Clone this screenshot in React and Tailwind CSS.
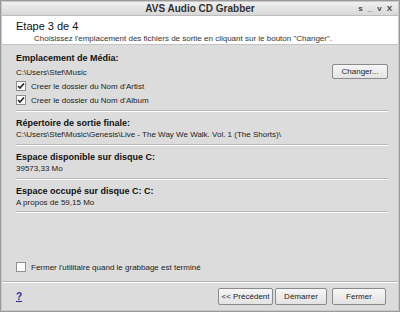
import React from "react";

function Check({ checked, label }) {
    return (
        <div className="flex items-center gap-[5px] h-[14px]">
            <div className="w-[10px] h-[10px] border border-[#8e8f8f] bg-white flex items-center justify-center">
                {checked && (
                    <svg width="8" height="8" viewBox="0 0 8 8">
                        <path d="M1 4 L3 6 L7 1.5" stroke="#222" strokeWidth="1.6" fill="none" />
                    </svg>
                )}
            </div>
            <span>{label}</span>
        </div>
    );
}

function Sep() {
    return <div className="h-[2px] border-t border-[#b9b9b9] border-b-white bg-[#dcdcdc] border-b mr-[10px]" />;
}

function Btn({ children, w, h = "h-[17px]" }) {
    return (
        <button className={`${w} ${h} whitespace-nowrap border border-[#8a8a8a] rounded-[2px] bg-gradient-to-b from-[#f6f6f6] to-[#e3e3e3] text-[8px] text-[#222] flex items-center justify-center`}>
            {children}
        </button>
    );
}

export default function App() {
    return (
        <div className="w-[400px] h-[312px] bg-[#9a9a9a] p-[1px] font-['Liberation_Sans',sans-serif] text-[#222] overflow-hidden">
            <div className="w-full h-full flex flex-col bg-[#dcdcdc] border border-[#c8c8c8]">
                {/* Title bar */}
                <div className="h-[14px] shrink-0 bg-gradient-to-b from-[#f0f0f0] to-[#d8d8d8] flex items-center relative border-b border-[#bdbdbd]">
                    <div className="flex-1 text-center text-[10px] font-bold text-[#333]">AVS Audio CD Grabber</div>
                    <div className="absolute right-[6px] top-0 h-full flex items-center gap-[5px] text-[8px] font-bold text-[#444]">
                        <span>s</span>
                        <span>_</span>
                        <span>v</span>
                        <span>X</span>
                    </div>
                </div>

                {/* Header */}
                <div className="h-[29px] shrink-0 bg-white border-b border-[#c4c4c4] pl-[14px] pt-[4px]">
                    <div className="text-[11px] leading-[13px] text-[#111]">Etape 3 de 4</div>
                    <div className="pl-[18px] text-[8px] leading-[11px] text-[#333]">Choisissez l'emplacement des fichiers de sortie en cliquant sur le bouton "Changer".</div>
                </div>

                {/* Body */}
                <div className="flex-1 flex flex-col pl-[14px] text-[8px] leading-[11px]">
                    <div className="pt-[7px] text-[9px] leading-[12px] font-bold text-[#111]">Emplacement de Média:</div>
                    <div className="flex items-center justify-between pr-[10px]">
                        <span className="pt-[1px]">C:\Users\Stef\Music</span>
                        <Btn w="w-[56px]" h="h-[15px]">Changer...</Btn>
                    </div>
                    <div className="flex flex-col">
                        <Check checked label="Creer le dossier du Nom d'Artist" />
                        <Check checked label="Creer le dossier du Nom d'Album" />
                    </div>
                    <div className="mt-[3px]"><Sep /></div>

                    <div className="pt-[5px] text-[9px] leading-[12px] font-bold text-[#111]">Répertoire de sortie finale:</div>
                    <div>C:\Users\Stef\Music\Genesis\Live - The Way We Walk. Vol. 1 (The Shorts)\</div>
                    <div className="mt-[4px]"><Sep /></div>

                    <div className="pt-[5px] text-[9px] leading-[12px] font-bold text-[#111]">Espace disponible sur disque C:</div>
                    <div>39573,33 Mo</div>
                    <div className="mt-[4px]"><Sep /></div>

                    <div className="pt-[5px] text-[9px] leading-[12px] font-bold text-[#111]">Espace occupé sur disque C: C:</div>
                    <div>A propos de 59,15 Mo</div>
                    <div className="mt-[3px]"><Sep /></div>

                    <div className="flex-1" />
                    <div className="pb-[7px]">
                        <Check label="Fermer l'utilitaire quand le grabbage est terminé" />
                    </div>
                </div>

                {/* Footer */}
                <div className="h-[2px] shrink-0 border-t border-[#b4b4b4] border-b border-b-white" />
                <div className="h-[27px] shrink-0 flex items-center pl-[14px] pr-[12px]">
                    <span className="text-[10px] font-bold text-[#2a2aa0] underline">?</span>
                    <div className="flex-1" />
                    <Btn w="w-[55px]">&lt;&lt; Précédent</Btn>
                    <div className="ml-[2px]"><Btn w="w-[52px]">Démarrer</Btn></div>
                    <div className="ml-[5px]"><Btn w="w-[54px]">Fermer</Btn></div>
                </div>
            </div>
        </div>
    );
}
